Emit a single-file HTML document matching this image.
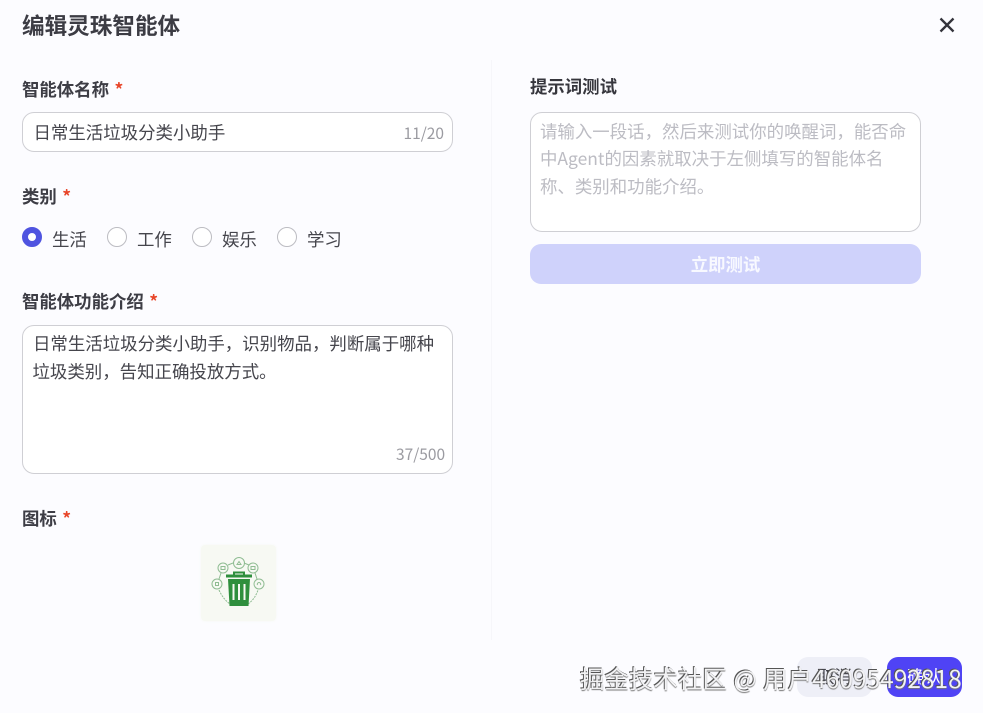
<!DOCTYPE html>
<html lang="zh">
<head>
<meta charset="utf-8">
<style>
html,body{margin:0;padding:0;background:#fcfcff;}
body{width:983px;height:713px;position:relative;overflow:hidden;font-family:"Liberation Sans","Noto Sans CJK SC",sans-serif;color:#3a3a42;}
.t{position:absolute;white-space:nowrap;font-family:"Noto Sans CJK SC","Liberation Sans",sans-serif;line-height:26px;}
.l{font-size:17.4px;font-weight:700;color:#3d3d45;}
.l i{font-style:normal;color:#e8462a;margin-left:5.5px;}
.b{font-size:17.45px;color:#45454c;}
.c{font-size:15.5px;color:#9b9ba1;font-family:"Noto Sans CJK SC",sans-serif;}
.box{position:absolute;box-sizing:border-box;background:#fff;border:1px solid #cfcfd4;border-radius:12px;}
.r{position:absolute;box-sizing:border-box;width:20px;height:20px;border-radius:50%;border:1px solid #bcbcc2;background:#fff;top:227px;}
.p{color:#bcbcc3;font-size:17.45px;}
.btn{position:absolute;border-radius:11px;}
</style>
</head>
<body>
<div class="t" style="left:22px;top:9px;font-size:22.6px;font-weight:700;line-height:32px;color:#3c3c44;">编辑灵珠智能体</div>
<svg style="position:absolute;left:937px;top:15px" width="20" height="20" viewBox="0 0 20 20"><path d="M3.500 3.500L16.500 16.500M16.500 3.500L3.500 16.500" stroke="#33333b" stroke-width="2.300" fill="none"/></svg>

<div style="position:absolute;left:491px;top:60px;width:1px;height:580px;background:#f6f6fa;"></div>

<div class="t l" style="left:22px;top:77px;">智能体名称<i>*</i></div>
<div class="box" style="left:22px;top:112px;width:431px;height:40px;"></div>
<div class="t b" style="left:33.500px;top:120px;">日常生活垃圾分类小助手</div>
<div class="t c" style="left:403.500px;top:120px;">11/20</div>

<div class="t l" style="left:22px;top:184px;">类别<i>*</i></div>
<div class="r" style="left:22px;border:6px solid #4f54e0;"></div>
<div class="t b" style="left:52px;top:227px;">生活</div>
<div class="r" style="left:107px;"></div>
<div class="t b" style="left:137px;top:227px;">工作</div>
<div class="r" style="left:192px;"></div>
<div class="t b" style="left:222px;top:227px;">娱乐</div>
<div class="r" style="left:277px;"></div>
<div class="t b" style="left:307px;top:227px;">学习</div>

<div class="t l" style="left:22px;top:289px;">智能体功能介绍<i>*</i></div>
<div class="box" style="left:22px;top:325px;width:431px;height:149px;"></div>
<div class="t b" style="left:33px;top:331px;">日常生活垃圾分类小助手，识别物品，判断属于哪种</div>
<div class="t b" style="left:32.500px;top:359px;">垃圾类别，告知正确投放方式。</div>
<div class="t c" style="left:396px;top:441px;">37/500</div>

<div class="t l" style="left:22px;top:506px;">图标<i>*</i></div>
<div style="position:absolute;left:201px;top:545px;width:75px;height:76px;background:#f7f9f3;border-radius:4px;box-shadow:0 0 3px #f7f9f3;"></div>
<svg style="position:absolute;left:200px;top:544px" width="77" height="78" viewBox="0 0 77 78">
<g fill="none" stroke="#8fbc92" stroke-width="1">
<path d="M19 46Q23 55 30 60M48 60Q55 55 58 46" stroke-dasharray="2 1"/>
<path d="M19 35L21 29M28 21L33 19M44 19L49 21M55 29L57 35"/>
<circle cx="39" cy="19" r="5.500"/><circle cx="23" cy="24" r="5"/><circle cx="53" cy="24" r="5"/><circle cx="17" cy="40" r="5"/><circle cx="59" cy="40" r="5"/>
<path d="M37 20.500l2-3 2 3zM21 22.500h4v3h-4zM51 22.500h4v3h-4zM15.500 38.500h3v3h-3zM57.500 41a1.700 1.700 0 1 1 3 0"/>
</g>
<g fill="#2f8f3d">
<rect x="26" y="30.500" width="26" height="3"/>
<path d="M33 31v-3.500h12V31h-2v-1.500h-8V31z"/>
<path d="M28 35h22l-1.500 27h-19zM32.500 40v16h2V40zM38 40v16h2V40zM43.500 40v16h2V40z" fill-rule="evenodd"/>
</g>
</svg>

<div class="t l" style="left:530px;top:74px;color:#36363d;">提示词测试</div>
<div class="box" style="left:530px;top:112px;width:391px;height:120px;"></div>
<div class="t p" style="left:540px;top:119px;">请输入一段话，然后来测试你的唤醒词，能否命</div>
<div class="t p" style="left:540px;top:146px;">中Agent的因素就取决于左侧填写的智能体名</div>
<div class="t p" style="left:540px;top:174px;">称、类别和功能介绍。</div>
<div class="btn" style="left:530px;top:244px;width:391px;height:40px;background:#cfd2fb;"></div>
<div class="t" style="left:530px;top:252px;width:391px;text-align:center;font-size:17.4px;font-weight:700;color:#f8f9ff;">立即测试</div>

<div class="btn" style="left:797px;top:657px;width:75px;height:40px;background:#eeeff7;"></div>
<div class="t" style="left:797px;top:664px;width:75px;text-align:center;font-size:17.4px;color:#45454c;">取消</div>
<div class="btn" style="left:887px;top:657px;width:75px;height:40px;background:#4f43f5;"></div>
<div class="t" style="left:887px;top:664px;width:75px;text-align:center;font-size:17.4px;color:#fff;">确认</div>

<div class="t" style="left:580px;top:660px;font-size:24.500px;line-height:38px;color:#f2f2f4;text-shadow:-1px -1px 0 #555,0 1px 1px #777;word-spacing:1px;">掘金技术社区 @ 用户46095492818</div>
</body>
</html>
